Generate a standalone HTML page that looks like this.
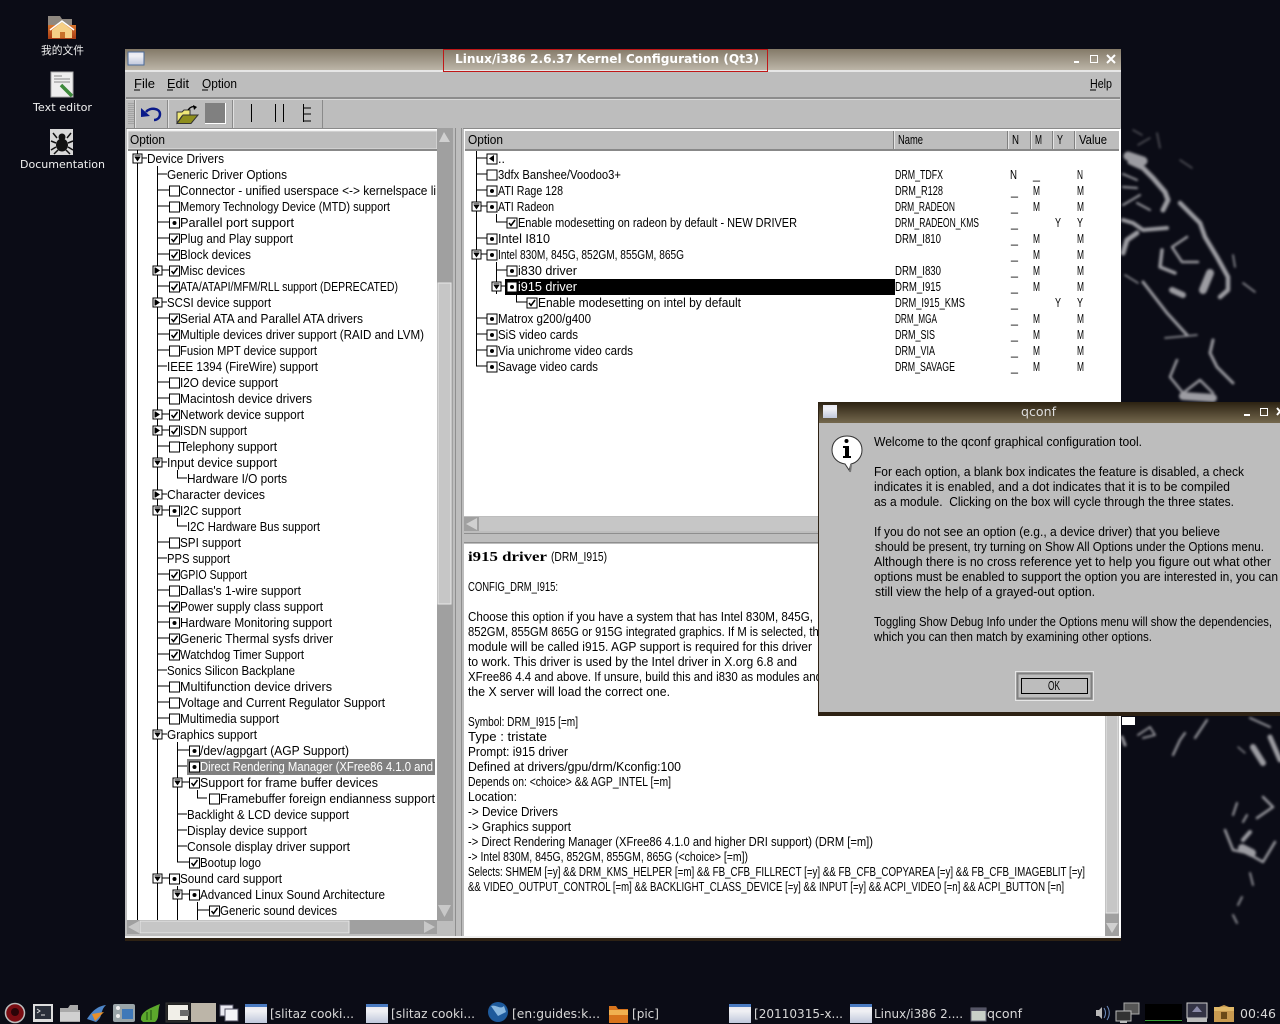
<!DOCTYPE html>
<html><head><meta charset="utf-8"><title>Kernel Configuration</title>
<style>
html,body{margin:0;padding:0;width:1280px;height:1024px;overflow:hidden;background:#0b0c16}
svg{display:block;position:absolute;left:0;top:0}
text{font-family:"Liberation Sans","Noto Sans CJK SC",sans-serif;font-size:12.5px;fill:#000;white-space:pre}
.d{font-family:"DejaVu Sans","Noto Sans CJK SC",sans-serif;font-size:11px;fill:#f0f0f0}
.t{font-family:"DejaVu Sans",sans-serif;font-size:12px;fill:#d8d8d8}
.w{fill:#fff}
.b{font-family:"Liberation Serif",serif;font-weight:bold;font-size:14px}
.tt{font-family:"DejaVu Sans",sans-serif;font-size:12px;fill:#fff}
.l{stroke:#000;stroke-width:1;fill:none;shape-rendering:crispEdges}
</style></head><body>
<svg width="1280" height="1024" viewBox="0 0 1280 1024" xmlns="http://www.w3.org/2000/svg">
<defs>
<linearGradient id="tb" x1="0" y1="0" x2="0" y2="1"><stop offset="0" stop-color="#847a68"/><stop offset="1" stop-color="#bcb5a8"/></linearGradient>
<linearGradient id="tb2" x1="0" y1="0" x2="0" y2="1"><stop offset="0" stop-color="#2c2212"/><stop offset="1" stop-color="#74684e"/></linearGradient>
<linearGradient id="win" x1="0" y1="0" x2="0" y2="1"><stop offset="0" stop-color="#e8e8f0"/><stop offset="0.3" stop-color="#f0f0f4"/><stop offset="1" stop-color="#c0c8dc"/></linearGradient>
<linearGradient id="fo" x1="0" y1="0" x2="0" y2="1"><stop offset="0" stop-color="#d8742c"/><stop offset="1" stop-color="#a83c14"/></linearGradient>
<filter id="bl" x="-20%" y="-20%" width="140%" height="140%"><feGaussianBlur stdDeviation="1.4"/></filter>
<g id="be"><rect x="-4.5" y="-4.5" width="10" height="10" fill="#fff" stroke="#000" shape-rendering="crispEdges"/></g>
<g id="bd"><use href="#be"/><circle cx="0.5" cy="0.5" r="2" fill="#000"/></g>
<g id="bc"><use href="#be"/><path d="M-2.5 0.5L-0.5 3L3.5 -2.5" fill="none" stroke="#000" stroke-width="1.5"/></g>
<g id="xd"><rect x="-4.5" y="-4.5" width="9" height="9" fill="#fff" stroke="#000" shape-rendering="crispEdges"/><path d="M-3 -1.5H3L0 3Z" fill="#000"/><path d="M-3 -2.500H3" stroke="#000"/><path d="M0 -7V-4.5M0 4.5V7" stroke="#000"/></g>
<g id="xr"><rect x="-4.5" y="-4.5" width="9" height="9" fill="#fff" stroke="#000" shape-rendering="crispEdges"/><path d="M-2 -3V3L2.5 0Z" fill="#000"/><path d="M-2.500 -3V3" stroke="#000"/><path d="M0 -7V-4.5M0 4.5V7" stroke="#000"/></g>
</defs>

<!-- wallpaper -->
<rect width="1280" height="1024" fill="#0b0c16"/>
<g filter="url(#bl)" fill="none" stroke="#9c9ca2" stroke-linecap="round" stroke-linejoin="round">
<path d="M1133 130L1142 135M1138 145L1150 138M1157 133L1160 148M1180 160L1192 168" stroke-width="1.2" stroke="#6a6a70"/>
<path d="M1128 156L1143 161" stroke-width="9"/>
<path d="M1130 162L1143 168L1153 178L1165 192L1168 200L1163 210" stroke-width="5"/>
<path d="M1123 174L1137 180M1123 187L1137 188M1123 205L1140 195M1137 203L1150 210" stroke-width="2"/>
<path d="M1123 220L1133 223L1143 230L1167 228" stroke-width="4"/>
<path d="M1123 253L1127 240L1137 233" stroke-width="5"/>
<path d="M1180 203L1190 213L1200 223L1205 237L1217 257L1228 277L1228 290L1220 297" stroke-width="4.5"/>
<path d="M1162 250L1160 267L1175 273" stroke-width="3.500"/>
<path d="M1187 237L1172 247L1182 262L1198 262" stroke-width="2.500"/>
<path d="M1210 273L1203 290" stroke-width="8"/>
<path d="M1125 275L1138 283M1165 338L1197 335" stroke-width="1.5"/>
<path d="M1143 282L1167 313L1187 335" stroke-width="3"/>
<path d="M1172 290L1183 295" stroke-width="6"/>
<path d="M1233 255L1235 267M1243 283L1255 292" stroke-width="1.5"/>
<path d="M1213 340L1210 353L1217 367L1233 383" stroke-width="3"/>
<path d="M1177 360L1170 377L1183 393L1200 380L1213 393" stroke-width="2.500"/>
<path d="M1183 396L1213 398" stroke-width="8"/>
<path d="M1138 735L1150 727L1155 735L1143 738" stroke-width="1.800"/>
<path d="M1122 737L1125 745" stroke-width="3"/>
<path d="M1173 755L1180 740L1185 733M1195 738L1207 720" stroke-width="2.200"/>
<path d="M1253 747L1263 763" stroke-width="6"/>
<path d="M1270 737L1280 760" stroke-width="5"/>
<path d="M1250 718L1270 727" stroke-width="2"/>
<path d="M1238 747L1245 753" stroke-width="1.200"/>
<path d="M1263 797L1273 807L1257 818" stroke-width="2.500"/>
<path d="M1237 803L1233 815M1247 815L1243 822" stroke-width="2"/>
<path d="M1225 830L1233 850L1247 853L1263 862L1275 842" stroke-width="2.500"/>
<path d="M1242 848L1252 853" stroke-width="8"/>
<path d="M1250 832L1243 840" stroke-width="4"/>
<path d="M1250 873L1253 885M1242 897L1238 905M1233 915L1237 923" stroke-width="1.800"/>
</g>

<!-- desktop icons -->
<g>
<path d="M48 16H60L62 19H72V27H48Z" fill="#8f8880"/>
<rect x="48" y="25" width="28" height="14" fill="url(#fo)"/>
<path d="M52 38V30L62 22L72 30V38Z" fill="#f6cf86"/><path d="M50 30L62 21L74 30" stroke="#fff" stroke-width="1.500" fill="none"/><rect x="60" y="32" width="5" height="6" fill="#c9702a"/>
<text class="d" x="41" y="54" textLength="43" lengthAdjust="spacingAndGlyphs">我的文件</text>
<rect x="51" y="72" width="22" height="25" fill="#eee" stroke="#aaa"/>
<path d="M54 76H62M54 79H70M54 82H70" stroke="#888"/>
<path d="M61 85L72 96" stroke="#3e8a3c" stroke-width="3.500"/>
<text class="d" x="33" y="111" textLength="59" lengthAdjust="spacingAndGlyphs">Text editor</text>
<rect x="50" y="129" width="23" height="26" fill="#d8d8d8"/>
<ellipse cx="62" cy="145" rx="6" ry="6.500" fill="#111"/><circle cx="62" cy="137" r="3.500" fill="#111"/>
<path d="M57 138L53 133M67 138L71 133M56 143L51 141M68 143L73 141M56 147L51 150M68 147L73 150M58 150L54 154M66 150L70 154" stroke="#111" stroke-width="1.500"/>
<text class="d" x="20" y="168" textLength="85" lengthAdjust="spacingAndGlyphs">Documentation</text>
</g>

<!-- main window -->
<rect x="125" y="49" width="996" height="889" fill="#bdbdbd"/>
<rect x="125" y="49" width="996" height="21" fill="url(#tb)"/>
<rect x="125" y="70" width="996" height="2" fill="#e6e6e6"/>
<rect x="128" y="52" width="16" height="13" fill="url(#win)" stroke="#4a6a9a"/>
<text class="tt" x="455" y="63" textLength="304" lengthAdjust="spacingAndGlyphs" style="font-weight:bold;fill:#fff">Linux/i386 2.6.37 Kernel Configuration (Qt3)</text>
<rect x="443.500" y="49.500" width="324" height="22" fill="none" stroke="#c01818" stroke-width="1" shape-rendering="crispEdges"/>
<path d="M1074 62H1079" stroke="#fff" stroke-width="2"/>
<rect x="1090.500" y="55.500" width="7" height="7" fill="none" stroke="#fff"/>
<path d="M1107 55L1115 63M1115 55L1107 63" stroke="#fff" stroke-width="2"/>

<text x="134" y="88" textLength="21" lengthAdjust="spacingAndGlyphs">File</text><path d="M134 90H140" stroke="#000"/>
<text x="167" y="88" textLength="22" lengthAdjust="spacingAndGlyphs">Edit</text><path d="M167 90H173" stroke="#000"/>
<text x="202" y="88" textLength="35" lengthAdjust="spacingAndGlyphs">Option</text><path d="M202 90H208" stroke="#000"/>
<text x="1090" y="88" textLength="22" lengthAdjust="spacingAndGlyphs">Help</text><path d="M1090 90H1096" stroke="#000"/>
<rect x="126" y="97" width="994" height="2" fill="#8c8c8c"/>
<rect x="126" y="99" width="994" height="1" fill="#d8d8d8"/>

<!-- toolbar -->
<path d="M129 103V125M131 103V125M133 103V125" stroke="#8a8a8a" stroke-dasharray="1 1"/>
<path d="M134.500 100V128M167.500 100V128M232.500 100V128M322.500 100V128" stroke="#8a8a8a" shape-rendering="crispEdges"/>
<path d="M135.500 100V128M168.500 100V128M233.500 100V128" stroke="#e0e0e0" shape-rendering="crispEdges"/>
<path d="M146 112C150 107 160 108 160 114C160 118 157 120 154 120" fill="none" stroke="#0a1a8a" stroke-width="2.500"/>
<path d="M141 108L141 117L150 116Z" fill="#0a1a8a"/>
<path d="M177 112H182L184 110H190V116H182L177 123Z" fill="#efe878" stroke="#333"/>
<path d="M177 123.500L183 115H198L191 123.500Z" fill="#8e8e1e" stroke="#333"/>
<path d="M188 110C190 107 193 106 195 107" fill="none" stroke="#000" stroke-width="1.300"/><path d="M193 105L197 107L194 110Z" fill="#000"/>
<rect x="205" y="103" width="20" height="20" fill="#808080"/>
<path d="M205 123.500H225.500V103" fill="none" stroke="#fff"/>
<path d="M251.500 104V122M275.500 104V122M283.500 104V122M303.500 104V122M303.500 108H311M303.500 114H311M303.500 121H311" stroke="#000" shape-rendering="crispEdges"/>
<rect x="126" y="128" width="994" height="1" fill="#8a8a8a"/>

<!-- left list -->
<rect x="127" y="129" width="311" height="792" fill="#fff"/>
<rect x="128" y="131" width="309" height="18" fill="#bdbdbd" stroke="#e4e4e4"/>
<rect x="128" y="149" width="309" height="2" fill="#888"/>
<text x="130" y="144" textLength="35" lengthAdjust="spacingAndGlyphs">Option</text>
<rect x="437" y="128" width="16" height="793" fill="#a0a0a0"/>
<rect x="438" y="283" width="13" height="321" fill="#c6c6c6" stroke="#e8e8e8"/>
<path d="M444 132L439 142H450Z" fill="#d0d0d0"/>
<path d="M438 905H451L444.500 917Z" fill="#c8c8c8"/>
<rect x="453" y="128" width="10" height="808" fill="#bdbdbd"/>
<path d="M455.500 128V936M461.500 128V936" stroke="#8e8e8e" shape-rendering="crispEdges"/>
<rect x="127" y="920" width="310" height="14" fill="#a0a0a0"/>
<rect x="140" y="921" width="209" height="12" fill="#c6c6c6" stroke="#e6e6e6"/>
<path d="M128 927L139 921V933Z" fill="#c8c8c8"/>
<path d="M435 927L424 921V933Z" fill="#c8c8c8"/>
<rect x="125" y="936" width="996" height="2" fill="#f0f0f0"/>
<rect x="125" y="938" width="996" height="3" fill="#2e2214"/>

<g class="tree">
<path class="l" d="M137.500 150V920M157.500 166V920M177.500 742V862M177.500 470V478H187M177.500 518V526H187M197.500 790V798H207M177.500 886V920M197.500 902V920"/>
<path class="l" d="M142 158H147M157 174H167M157 190H170M157 206H170M157 222H170M157 238H170M157 254H170M157 270H170M157 286H170M157 302H167M157 318H170M157 334H170M157 350H170M157 366H167M157 382H170M157 398H170M157 414H170M157 430H170M157 446H170M157 462H167M157 494H167M157 510H170M157 542H170M157 558H167M157 574H170M157 590H170M157 606H170M157 622H170M157 638H170M157 654H170M157 670H167M157 686H170M157 702H170M157 718H170M157 734H167M177 750H190M177 766H190M177 782H190M177 814H187M177 830H187M177 846H187M177 862H190M157 878H170M177 894H190M197 910H210"/>
<use href="#xd" x="137.500" y="158.500"/>
<use href="#xr" x="157.500" y="270.500"/><use href="#xr" x="157.500" y="302.500"/><use href="#xr" x="157.500" y="414.500"/><use href="#xr" x="157.500" y="430.500"/>
<use href="#xd" x="157.500" y="462.500"/><use href="#xr" x="157.500" y="494.500"/><use href="#xd" x="157.500" y="510.500"/><use href="#xd" x="157.500" y="734.500"/>
<use href="#xd" x="177.500" y="782.500"/><use href="#xd" x="157.500" y="878.500"/><use href="#xd" x="177.500" y="894.500"/>
<use href="#be" x="174" y="190.500"/><use href="#be" x="174" y="206.500"/><use href="#bd" x="174" y="222.500"/><use href="#bc" x="174" y="238.500"/><use href="#bc" x="174" y="254.500"/><use href="#bc" x="174" y="270.500"/><use href="#bc" x="174" y="286.500"/><use href="#bc" x="174" y="318.500"/><use href="#bc" x="174" y="334.500"/><use href="#be" x="174" y="350.500"/><use href="#be" x="174" y="382.500"/><use href="#be" x="174" y="398.500"/><use href="#bc" x="174" y="414.500"/><use href="#bc" x="174" y="430.500"/><use href="#be" x="174" y="446.500"/><use href="#bd" x="174" y="510.500"/><use href="#be" x="174" y="542.500"/><use href="#bc" x="174" y="574.500"/><use href="#be" x="174" y="590.500"/><use href="#bc" x="174" y="606.500"/><use href="#bd" x="174" y="622.500"/><use href="#bc" x="174" y="638.500"/><use href="#bc" x="174" y="654.500"/><use href="#be" x="174" y="686.500"/><use href="#be" x="174" y="702.500"/><use href="#be" x="174" y="718.500"/><use href="#bd" x="174" y="878.500"/>
<use href="#bd" x="194" y="750.500"/><rect x="187" y="759" width="248" height="16" fill="#808080"/><use href="#bd" x="194" y="766.500"/><use href="#bc" x="194" y="782.500"/><use href="#be" x="214" y="798.500"/><use href="#bc" x="194" y="862.500"/><use href="#bd" x="194" y="894.500"/><use href="#bc" x="214" y="910.500"/>
<text x="147" y="163" textLength="77" lengthAdjust="spacingAndGlyphs">Device Drivers</text>
<text x="167" y="179" textLength="120" lengthAdjust="spacingAndGlyphs">Generic Driver Options</text>
<text x="180" y="195" textLength="256" lengthAdjust="spacingAndGlyphs">Connector - unified userspace &lt;-&gt; kernelspace li</text>
<text x="180" y="211" textLength="210" lengthAdjust="spacingAndGlyphs">Memory Technology Device (MTD) support</text>
<text x="180" y="227" textLength="114" lengthAdjust="spacingAndGlyphs">Parallel port support</text>
<text x="180" y="243" textLength="113" lengthAdjust="spacingAndGlyphs">Plug and Play support</text>
<text x="180" y="259" textLength="71" lengthAdjust="spacingAndGlyphs">Block devices</text>
<text x="180" y="275" textLength="65" lengthAdjust="spacingAndGlyphs">Misc devices</text>
<text x="180" y="291" textLength="218" lengthAdjust="spacingAndGlyphs">ATA/ATAPI/MFM/RLL support (DEPRECATED)</text>
<text x="167" y="307" textLength="104" lengthAdjust="spacingAndGlyphs">SCSI device support</text>
<text x="180" y="323" textLength="183" lengthAdjust="spacingAndGlyphs">Serial ATA and Parallel ATA drivers</text>
<text x="180" y="339" textLength="244" lengthAdjust="spacingAndGlyphs">Multiple devices driver support (RAID and LVM)</text>
<text x="180" y="355" textLength="137" lengthAdjust="spacingAndGlyphs">Fusion MPT device support</text>
<text x="167" y="371" textLength="151" lengthAdjust="spacingAndGlyphs">IEEE 1394 (FireWire) support</text>
<text x="180" y="387" textLength="98" lengthAdjust="spacingAndGlyphs">I2O device support</text>
<text x="180" y="403" textLength="132" lengthAdjust="spacingAndGlyphs">Macintosh device drivers</text>
<text x="180" y="419" textLength="124" lengthAdjust="spacingAndGlyphs">Network device support</text>
<text x="180" y="435" textLength="67" lengthAdjust="spacingAndGlyphs">ISDN support</text>
<text x="180" y="451" textLength="97" lengthAdjust="spacingAndGlyphs">Telephony support</text>
<text x="167" y="467" textLength="110" lengthAdjust="spacingAndGlyphs">Input device support</text>
<text x="187" y="483" textLength="100" lengthAdjust="spacingAndGlyphs">Hardware I/O ports</text>
<text x="167" y="499" textLength="98" lengthAdjust="spacingAndGlyphs">Character devices</text>
<text x="180" y="515" textLength="61" lengthAdjust="spacingAndGlyphs">I2C support</text>
<text x="187" y="531" textLength="133" lengthAdjust="spacingAndGlyphs">I2C Hardware Bus support</text>
<text x="180" y="547" textLength="61" lengthAdjust="spacingAndGlyphs">SPI support</text>
<text x="167" y="563" textLength="63" lengthAdjust="spacingAndGlyphs">PPS support</text>
<text x="180" y="579" textLength="67" lengthAdjust="spacingAndGlyphs">GPIO Support</text>
<text x="180" y="595" textLength="121" lengthAdjust="spacingAndGlyphs">Dallas's 1-wire support</text>
<text x="180" y="611" textLength="143" lengthAdjust="spacingAndGlyphs">Power supply class support</text>
<text x="180" y="627" textLength="152" lengthAdjust="spacingAndGlyphs">Hardware Monitoring support</text>
<text x="180" y="643" textLength="153" lengthAdjust="spacingAndGlyphs">Generic Thermal sysfs driver</text>
<text x="180" y="659" textLength="124" lengthAdjust="spacingAndGlyphs">Watchdog Timer Support</text>
<text x="167" y="675" textLength="128" lengthAdjust="spacingAndGlyphs">Sonics Silicon Backplane</text>
<text x="180" y="691" textLength="152" lengthAdjust="spacingAndGlyphs">Multifunction device drivers</text>
<text x="180" y="707" textLength="205" lengthAdjust="spacingAndGlyphs">Voltage and Current Regulator Support</text>
<text x="180" y="723" textLength="99" lengthAdjust="spacingAndGlyphs">Multimedia support</text>
<text x="167" y="739" textLength="90" lengthAdjust="spacingAndGlyphs">Graphics support</text>
<text x="200" y="755" textLength="149" lengthAdjust="spacingAndGlyphs">/dev/agpgart (AGP Support)</text>
<text class="w" x="200" y="771" textLength="233" lengthAdjust="spacingAndGlyphs">Direct Rendering Manager (XFree86 4.1.0 and</text>
<text x="200" y="787" textLength="178" lengthAdjust="spacingAndGlyphs">Support for frame buffer devices</text>
<text x="220" y="803" textLength="215" lengthAdjust="spacingAndGlyphs">Framebuffer foreign endianness support</text>
<text x="187" y="819" textLength="162" lengthAdjust="spacingAndGlyphs">Backlight &amp; LCD device support</text>
<text x="187" y="835" textLength="120" lengthAdjust="spacingAndGlyphs">Display device support</text>
<text x="187" y="851" textLength="163" lengthAdjust="spacingAndGlyphs">Console display driver support</text>
<text x="200" y="867" textLength="61" lengthAdjust="spacingAndGlyphs">Bootup logo</text>
<text x="180" y="883" textLength="102" lengthAdjust="spacingAndGlyphs">Sound card support</text>
<text x="200" y="899" textLength="185" lengthAdjust="spacingAndGlyphs">Advanced Linux Sound Architecture</text>
<text x="220" y="915" textLength="117" lengthAdjust="spacingAndGlyphs">Generic sound devices</text>
</g>

<!-- right list -->
<rect x="464" y="129" width="657" height="387" fill="#fff"/>
<rect x="465" y="131" width="654" height="18" fill="#bdbdbd"/>
<rect x="465" y="149" width="654" height="2" fill="#888"/>
<path d="M893.500 131V149M1007.500 131V149M1030.500 131V149M1052.500 131V149M1074.500 131V149" stroke="#808080" shape-rendering="crispEdges"/>
<path d="M894.500 131V149M1008.500 131V149M1031.500 131V149M1053.500 131V149M1075.500 131V149" stroke="#e4e4e4" shape-rendering="crispEdges"/>
<text x="468" y="144" textLength="35" lengthAdjust="spacingAndGlyphs">Option</text>
<text x="898" y="144" textLength="25" lengthAdjust="spacingAndGlyphs">Name</text>
<text x="1012" y="144" textLength="7" lengthAdjust="spacingAndGlyphs">N</text><text x="1035" y="144" textLength="7" lengthAdjust="spacingAndGlyphs">M</text><text x="1057" y="144" textLength="6" lengthAdjust="spacingAndGlyphs">Y</text>
<text x="1079" y="144" textLength="28" lengthAdjust="spacingAndGlyphs">Value</text>

<rect x="505" y="279" width="390" height="16" fill="#000"/>
<path class="l" d="M476.500 151V366H487M476 158H487M476 174H487M476 190H487M476 206H487M476 238H487M476 254H487M476 318H487M476 334H487M476 350H487M496.500 214V222H507M496.500 262V294M496 270H507M496 286H507M516.500 294V302H527"/>
<use href="#xd" x="476.500" y="206.500"/><use href="#xd" x="476.500" y="254.500"/><use href="#xd" x="496.500" y="286.500"/>
<g>
<rect x="487" y="154" width="10" height="10" fill="#fff" stroke="#000" shape-rendering="crispEdges"/><path d="M489 158.500L494 155V162Z" fill="#000"/>
<use href="#be" x="491.500" y="174.500"/><use href="#bd" x="491.500" y="190.500"/><use href="#bd" x="491.500" y="206.500"/><use href="#bc" x="511.500" y="222.500"/><use href="#bd" x="491.500" y="238.500"/><use href="#bd" x="491.500" y="254.500"/><use href="#bd" x="511.500" y="270.500"/><use href="#bd" x="511.500" y="286.500"/><use href="#bc" x="531.500" y="302.500"/><use href="#bd" x="491.500" y="318.500"/><use href="#bd" x="491.500" y="334.500"/><use href="#bd" x="491.500" y="350.500"/><use href="#bd" x="491.500" y="366.500"/>
</g>
<text x="498" y="163" textLength="7">..</text>
<text x="498" y="179" textLength="123" lengthAdjust="spacingAndGlyphs">3dfx Banshee/Voodoo3+</text>
<text x="498" y="195" textLength="65" lengthAdjust="spacingAndGlyphs">ATI Rage 128</text>
<text x="498" y="211" textLength="56" lengthAdjust="spacingAndGlyphs">ATI Radeon</text>
<text x="518" y="227" textLength="279" lengthAdjust="spacingAndGlyphs">Enable modesetting on radeon by default - NEW DRIVER</text>
<text x="498" y="243" textLength="52" lengthAdjust="spacingAndGlyphs">Intel I810</text>
<text x="498" y="259" textLength="186" lengthAdjust="spacingAndGlyphs">Intel 830M, 845G, 852GM, 855GM, 865G</text>
<text x="518" y="275" textLength="59" lengthAdjust="spacingAndGlyphs">i830 driver</text>
<text class="w" x="518" y="291" textLength="59" lengthAdjust="spacingAndGlyphs">i915 driver</text>
<text x="538" y="307" textLength="203" lengthAdjust="spacingAndGlyphs">Enable modesetting on intel by default</text>
<text x="498" y="323" textLength="93" lengthAdjust="spacingAndGlyphs">Matrox g200/g400</text>
<text x="498" y="339" textLength="80" lengthAdjust="spacingAndGlyphs">SiS video cards</text>
<text x="498" y="355" textLength="135" lengthAdjust="spacingAndGlyphs">Via unichrome video cards</text>
<text x="498" y="371" textLength="100" lengthAdjust="spacingAndGlyphs">Savage video cards</text>
<g>
<text x="895" y="179" textLength="48" lengthAdjust="spacingAndGlyphs">DRM_TDFX</text>
<text x="895" y="195" textLength="48" lengthAdjust="spacingAndGlyphs">DRM_R128</text>
<text x="895" y="211" textLength="60" lengthAdjust="spacingAndGlyphs">DRM_RADEON</text>
<text x="895" y="227" textLength="84" lengthAdjust="spacingAndGlyphs">DRM_RADEON_KMS</text>
<text x="895" y="243" textLength="46" lengthAdjust="spacingAndGlyphs">DRM_I810</text>
<text x="895" y="275" textLength="46" lengthAdjust="spacingAndGlyphs">DRM_I830</text>
<text x="895" y="291" textLength="46" lengthAdjust="spacingAndGlyphs">DRM_I915</text>
<text x="895" y="307" textLength="70" lengthAdjust="spacingAndGlyphs">DRM_I915_KMS</text>
<text x="895" y="323" textLength="42" lengthAdjust="spacingAndGlyphs">DRM_MGA</text>
<text x="895" y="339" textLength="40" lengthAdjust="spacingAndGlyphs">DRM_SIS</text>
<text x="895" y="355" textLength="40" lengthAdjust="spacingAndGlyphs">DRM_VIA</text>
<text x="895" y="371" textLength="60" lengthAdjust="spacingAndGlyphs">DRM_SAVAGE</text>
<text x="1010" y="179" textLength="7" lengthAdjust="spacingAndGlyphs">N</text><text x="1033" y="179" textLength="6">_</text><text x="1077" y="179" textLength="6" lengthAdjust="spacingAndGlyphs">N</text>
<text x="1011" y="195">_</text><text x="1033" y="195" textLength="7" lengthAdjust="spacingAndGlyphs">M</text><text x="1077" y="195" textLength="7" lengthAdjust="spacingAndGlyphs">M</text>
<text x="1011" y="211">_</text><text x="1033" y="211" textLength="7" lengthAdjust="spacingAndGlyphs">M</text><text x="1077" y="211" textLength="7" lengthAdjust="spacingAndGlyphs">M</text>
<text x="1011" y="227">_</text><text x="1055" y="227" textLength="6" lengthAdjust="spacingAndGlyphs">Y</text><text x="1077" y="227" textLength="6" lengthAdjust="spacingAndGlyphs">Y</text>
<text x="1011" y="243">_</text><text x="1033" y="243" textLength="7" lengthAdjust="spacingAndGlyphs">M</text><text x="1077" y="243" textLength="7" lengthAdjust="spacingAndGlyphs">M</text>
<text x="1011" y="259">_</text><text x="1033" y="259" textLength="7" lengthAdjust="spacingAndGlyphs">M</text><text x="1077" y="259" textLength="7" lengthAdjust="spacingAndGlyphs">M</text>
<text x="1011" y="275">_</text><text x="1033" y="275" textLength="7" lengthAdjust="spacingAndGlyphs">M</text><text x="1077" y="275" textLength="7" lengthAdjust="spacingAndGlyphs">M</text>
<text x="1011" y="291">_</text><text x="1033" y="291" textLength="7" lengthAdjust="spacingAndGlyphs">M</text><text x="1077" y="291" textLength="7" lengthAdjust="spacingAndGlyphs">M</text>
<text x="1011" y="307">_</text><text x="1055" y="307" textLength="6" lengthAdjust="spacingAndGlyphs">Y</text><text x="1077" y="307" textLength="6" lengthAdjust="spacingAndGlyphs">Y</text>
<text x="1011" y="323">_</text><text x="1033" y="323" textLength="7" lengthAdjust="spacingAndGlyphs">M</text><text x="1077" y="323" textLength="7" lengthAdjust="spacingAndGlyphs">M</text>
<text x="1011" y="339">_</text><text x="1033" y="339" textLength="7" lengthAdjust="spacingAndGlyphs">M</text><text x="1077" y="339" textLength="7" lengthAdjust="spacingAndGlyphs">M</text>
<text x="1011" y="355">_</text><text x="1033" y="355" textLength="7" lengthAdjust="spacingAndGlyphs">M</text><text x="1077" y="355" textLength="7" lengthAdjust="spacingAndGlyphs">M</text>
<text x="1011" y="371">_</text><text x="1033" y="371" textLength="7" lengthAdjust="spacingAndGlyphs">M</text><text x="1077" y="371" textLength="7" lengthAdjust="spacingAndGlyphs">M</text>
</g>
<!-- right h scrollbar + splitter -->
<rect x="464" y="517" width="657" height="14" fill="#c6c6c6"/>
<rect x="464" y="517" width="15" height="14" fill="#a0a0a0"/>
<path d="M466 524L477 518V530Z" fill="#d0d0d0"/>
<rect x="464" y="531" width="657" height="13" fill="#bdbdbd"/>
<path d="M464 533.500H1121M464 542.500H1121" stroke="#8e8e8e" shape-rendering="crispEdges"/>

<!-- info pane -->
<rect x="464" y="544" width="657" height="392" fill="#fff"/>
<rect x="1105" y="544" width="14" height="392" fill="#a0a0a0"/>
<rect x="1106" y="545" width="12" height="368" fill="#c6c6c6" stroke="#e8e8e8"/>
<path d="M1106 923H1118L1112 933Z" fill="#d0d0d0"/>
<text class="b" x="468" y="561" textLength="79" lengthAdjust="spacingAndGlyphs">i915 driver</text>
<text x="551" y="561" textLength="56" lengthAdjust="spacingAndGlyphs">(DRM_I915)</text>
<text x="468" y="591" textLength="90" lengthAdjust="spacingAndGlyphs">CONFIG_DRM_I915:</text>
<text x="468" y="621" textLength="345" lengthAdjust="spacingAndGlyphs">Choose this option if you have a system that has Intel 830M, 845G,</text>
<text x="468" y="636" textLength="357" lengthAdjust="spacingAndGlyphs">852GM, 855GM 865G or 915G integrated graphics. If M is selected, the</text>
<text x="468" y="651" textLength="344" lengthAdjust="spacingAndGlyphs">module will be called i915. AGP support is required for this driver</text>
<text x="468" y="666" textLength="329" lengthAdjust="spacingAndGlyphs">to work. This driver is used by the Intel driver in X.org 6.8 and</text>
<text x="468" y="681" textLength="354" lengthAdjust="spacingAndGlyphs">XFree86 4.4 and above. If unsure, build this and i830 as modules and</text>
<text x="468" y="696" textLength="202" lengthAdjust="spacingAndGlyphs">the X server will load the correct one.</text>
<text x="468" y="726" textLength="110" lengthAdjust="spacingAndGlyphs">Symbol: DRM_I915 [=m]</text>
<text x="468" y="741" textLength="79" lengthAdjust="spacingAndGlyphs">Type : tristate</text>
<text x="468" y="756" textLength="100" lengthAdjust="spacingAndGlyphs">Prompt: i915 driver</text>
<text x="468" y="771" textLength="213" lengthAdjust="spacingAndGlyphs">Defined at drivers/gpu/drm/Kconfig:100</text>
<text x="468" y="786" textLength="203" lengthAdjust="spacingAndGlyphs">Depends on: &lt;choice&gt; &amp;&amp; AGP_INTEL [=m]</text>
<text x="468" y="801" textLength="49" lengthAdjust="spacingAndGlyphs">Location:</text>
<text x="468" y="816" textLength="90" lengthAdjust="spacingAndGlyphs">-&gt; Device Drivers</text>
<text x="468" y="831" textLength="103" lengthAdjust="spacingAndGlyphs">-&gt; Graphics support</text>
<text x="468" y="846" textLength="405" lengthAdjust="spacingAndGlyphs">-&gt; Direct Rendering Manager (XFree86 4.1.0 and higher DRI support) (DRM [=m])</text>
<text x="468" y="861" textLength="280" lengthAdjust="spacingAndGlyphs">-&gt; Intel 830M, 845G, 852GM, 855GM, 865G (&lt;choice&gt; [=m])</text>
<text x="468" y="876" textLength="617" lengthAdjust="spacingAndGlyphs">Selects: SHMEM [=y] &amp;&amp; DRM_KMS_HELPER [=m] &amp;&amp; FB_CFB_FILLRECT [=y] &amp;&amp; FB_CFB_COPYAREA [=y] &amp;&amp; FB_CFB_IMAGEBLIT [=y]</text>
<text x="468" y="891" textLength="596" lengthAdjust="spacingAndGlyphs">&amp;&amp; VIDEO_OUTPUT_CONTROL [=m] &amp;&amp; BACKLIGHT_CLASS_DEVICE [=y] &amp;&amp; INPUT [=y] &amp;&amp; ACPI_VIDEO [=n] &amp;&amp; ACPI_BUTTON [=n]</text>

<rect x="1122" y="717" width="13" height="8" fill="#fff"/>

<!-- dialog -->
<rect x="818" y="402" width="462" height="314" fill="#bdbdbd"/>
<rect x="818" y="402" width="462" height="21" fill="url(#tb2)"/>
<rect x="818" y="712" width="462" height="4" fill="#2e2214"/>
<rect x="818" y="402" width="1" height="314" fill="#2e2214"/>
<rect x="823" y="405" width="14" height="13" fill="url(#win)"/>
<text class="tt" x="1021" y="416" textLength="35" lengthAdjust="spacingAndGlyphs" style="fill:#ddd">qconf</text>
<path d="M1244 415H1250" stroke="#fff" stroke-width="2"/>
<rect x="1260.500" y="408.500" width="7" height="7" fill="none" stroke="#fff"/>
<path d="M1277 408L1283 415M1283 408L1277 415" stroke="#fff" stroke-width="2"/>
<path d="M847 436C856 436 862 442 862 450C862 458 856 463 851 464L849 470L845 464C838 463 832 458 832 450C832 442 838 436 847 436Z" fill="#fff" stroke="#333"/>
<path d="M851 465L850 472" stroke="#777" stroke-width="2"/>
<circle cx="846.500" cy="441" r="2" fill="#000"/>
<path d="M843 446H849V456H851V458H843V456H845V448H843Z" fill="#000"/>
<text x="874" y="446" textLength="268" lengthAdjust="spacingAndGlyphs">Welcome to the qconf graphical configuration tool.</text>
<text x="874" y="476" textLength="370" lengthAdjust="spacingAndGlyphs">For each option, a blank box indicates the feature is disabled, a check</text>
<text x="874" y="491" textLength="356" lengthAdjust="spacingAndGlyphs">indicates it is enabled, and a dot indicates that it is to be compiled</text>
<text x="874" y="506" textLength="360" lengthAdjust="spacingAndGlyphs">as a module.  Clicking on the box will cycle through the three states.</text>
<text x="874" y="536" textLength="346" lengthAdjust="spacingAndGlyphs">If you do not see an option (e.g., a device driver) that you believe</text>
<text x="875" y="551" textLength="389" lengthAdjust="spacingAndGlyphs">should be present, try turning on Show All Options under the Options menu.</text>
<text x="874" y="566" textLength="397" lengthAdjust="spacingAndGlyphs">Although there is no cross reference yet to help you figure out what other</text>
<text x="874" y="581" textLength="404" lengthAdjust="spacingAndGlyphs">options must be enabled to support the option you are interested in, you can</text>
<text x="875" y="596" textLength="220" lengthAdjust="spacingAndGlyphs">still view the help of a grayed-out option.</text>
<text x="874" y="626" textLength="398" lengthAdjust="spacingAndGlyphs">Toggling Show Debug Info under the Options menu will show the dependencies,</text>
<text x="874" y="641" textLength="278" lengthAdjust="spacingAndGlyphs">which you can then match by examining other options.</text>
<rect x="1015.500" y="671.500" width="78" height="29" fill="#bdbdbd" stroke="#e6e6e6"/>
<rect x="1017.500" y="673.500" width="74" height="25" fill="none" stroke="#808080" stroke-width="2"/>
<rect x="1021.500" y="678.500" width="66" height="15" fill="none" stroke="#000"/>
<text x="1048" y="690" textLength="12" lengthAdjust="spacingAndGlyphs">OK</text>

<!-- taskbar -->
<circle cx="15" cy="1013" r="9.500" fill="#7a0c12" stroke="#bbb" stroke-width="1.500"/><circle cx="15" cy="1012" r="4" fill="#2a0408"/>
<rect x="33" y="1004" width="20" height="18" fill="#ddd"/><rect x="35" y="1006" width="16" height="13" fill="#2a2f3a"/><path d="M37 1009L40 1011L37 1013M41 1015H45" stroke="#ddd" fill="none"/>
<path d="M60 1008H68L70 1005H78V1010H80V1022H60Z" fill="#a9a9a9"/><rect x="60" y="1012" width="20" height="9" fill="#d0d0d0"/>
<path d="M87 1019C94 1008 100 1006 106 1005C99 1012 104 1016 96 1022Z" fill="#4e86c8"/><path d="M92 1014L104 1012L95 1021Z" fill="#e8902a"/>
<rect x="113" y="1004" width="22" height="18" rx="2" fill="#99a4a8"/><rect x="122" y="1009" width="11" height="10" fill="#3f78b8"/><circle cx="118" cy="1008" r="2" fill="#eee"/><circle cx="118" cy="1016" r="2" fill="#eee"/>
<path d="M141 1020C140 1012 150 1008 160 1004C157 1012 160 1018 155 1022H143Z" fill="#5ca82c"/><path d="M147 1020V1012M151 1020V1010" stroke="#1c4c10"/>
<rect x="166" y="1003" width="24" height="19" fill="#222" stroke="#333"/><rect x="168" y="1005" width="20" height="15" fill="#f1efe8"/><rect x="180" y="1010" width="9" height="6" fill="#6a6a6a"/>
<rect x="191" y="1003" width="25" height="19" fill="#bcb5a8"/>
<rect x="220" y="1005" width="13" height="11" fill="#e8e8f0" stroke="#556"/><rect x="225" y="1009" width="13" height="12" fill="#f4f4f8" stroke="#556"/>
<rect x="245" y="1006" width="22" height="17" fill="url(#win)"/><rect x="245" y="1004" width="22" height="3" fill="#4a7ac0"/>
<text class="t" x="270" y="1018" textLength="84" lengthAdjust="spacingAndGlyphs">[slitaz cooki...</text>
<rect x="366" y="1006" width="22" height="17" fill="url(#win)"/><rect x="366" y="1004" width="22" height="3" fill="#4a7ac0"/>
<text class="t" x="391" y="1018" textLength="84" lengthAdjust="spacingAndGlyphs">[slitaz cooki...</text>
<circle cx="498" cy="1012" r="10" fill="#1e5a9c"/><path d="M491 1006C496 1004 500 1010 504 1006L506 1012L498 1016Z" fill="#8ab8e0"/>
<text class="t" x="512" y="1018" textLength="88" lengthAdjust="spacingAndGlyphs">[en:guides:k...</text>
<path d="M609 1006H616L618 1009H628V1023H609Z" fill="#d8741c"/><rect x="609" y="1010" width="19" height="5" fill="#f0b050"/>
<text class="t" x="632" y="1018" textLength="27" lengthAdjust="spacingAndGlyphs">[pic]</text>
<rect x="729" y="1006" width="22" height="17" fill="url(#win)"/><rect x="729" y="1004" width="22" height="3" fill="#4a7ac0"/>
<text class="t" x="754" y="1018" textLength="89" lengthAdjust="spacingAndGlyphs">[20110315-x...</text>
<rect x="850" y="1006" width="22" height="17" fill="url(#win)"/><rect x="850" y="1004" width="22" height="3" fill="#4a7ac0"/>
<text class="t" x="874" y="1018" textLength="89" lengthAdjust="spacingAndGlyphs">Linux/i386 2....</text>
<rect x="971" y="1008" width="15" height="13" fill="#c8d0c8" stroke="#667"/><rect x="971" y="1008" width="15" height="3" fill="#556"/>
<text class="t" x="987" y="1018" textLength="35" lengthAdjust="spacingAndGlyphs">qconf</text>
<path d="M1096 1010H1099L1102 1007V1019L1099 1016H1096Z" fill="#b8b8b8"/><path d="M1104 1008C1106 1011 1106 1015 1104 1018M1107 1006C1110 1010 1110 1016 1107 1020" stroke="#6f8fc0" fill="none"/>
<rect x="1124" y="1003" width="15" height="11" fill="#555" stroke="#aaa"/><rect x="1116" y="1011" width="15" height="10" fill="#333" stroke="#bbb"/><rect x="1120" y="1021" width="7" height="2" fill="#bbb"/>
<rect x="1145" y="1004" width="37" height="19" fill="#000"/><rect x="1145" y="1020" width="37" height="1" fill="#3aa03a"/>
<rect x="1187" y="1003" width="20" height="15" fill="#334" stroke="#ccc"/><path d="M1192 1012L1197 1006L1202 1012Z" fill="#8a8aa8"/><rect x="1187" y="1018" width="20" height="4" fill="#bbb"/>
<path d="M1214 1009L1224 1005L1234 1009V1022H1214Z" fill="#c89a50"/><rect x="1214" y="1007" width="20" height="4" fill="#e0b868"/><rect x="1221" y="1012" width="6" height="7" fill="#6a4a18"/>
<text class="t" x="1240" y="1018" textLength="36" lengthAdjust="spacingAndGlyphs">00:46</text>
</svg>
</body></html>
